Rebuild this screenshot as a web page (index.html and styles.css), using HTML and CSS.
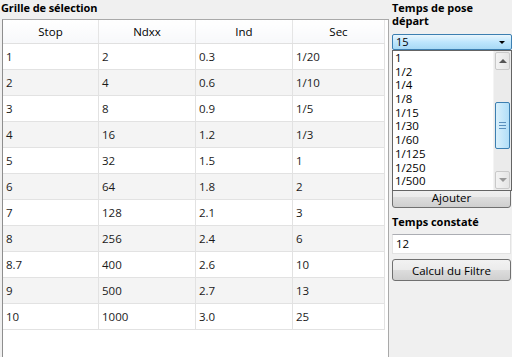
FILE: index.html
```html
<!DOCTYPE html>
<html>
<head>
<meta charset="utf-8">
<link rel="stylesheet" href="styles.css">
</head>
<body>
<div class="app">
  <section class="left">
    <div class="title">Grille de sélection</div>
    <div class="grid">
      <table class="table">
        <thead>
          <tr><th>Stop</th><th>Ndxx</th><th>Ind</th><th>Sec</th></tr>
        </thead>
        <tbody>
          <tr><td>1</td><td>2</td><td>0.3</td><td>1/20</td></tr>
          <tr><td>2</td><td>4</td><td>0.6</td><td>1/10</td></tr>
          <tr><td>3</td><td>8</td><td>0.9</td><td>1/5</td></tr>
          <tr><td>4</td><td>16</td><td>1.2</td><td>1/3</td></tr>
          <tr><td>5</td><td>32</td><td>1.5</td><td>1</td></tr>
          <tr><td>6</td><td>64</td><td>1.8</td><td>2</td></tr>
          <tr><td>7</td><td>128</td><td>2.1</td><td>3</td></tr>
          <tr><td>8</td><td>256</td><td>2.4</td><td>6</td></tr>
          <tr><td>8.7</td><td>400</td><td>2.6</td><td>10</td></tr>
          <tr><td>9</td><td>500</td><td>2.7</td><td>13</td></tr>
          <tr><td>10</td><td>1000</td><td>3.0</td><td>25</td></tr>
        </tbody>
      </table>
    </div>
  </section>
  <aside class="right">
    <div class="label">Temps de pose départ</div>
    <div class="combo-wrap">
      <div class="combo"><span>15</span><span class="arrow"></span></div>
      <div class="dropdown">
        <ul class="list">
          <li>1</li><li>1/2</li><li>1/4</li><li>1/8</li><li>1/15</li>
          <li>1/30</li><li>1/60</li><li>1/125</li><li>1/250</li><li>1/500</li>
        </ul>
        <div class="scrollbar">
          <div class="sb-btn"><span class="tri up"></span></div>
          <div class="sb-track">
            <div class="sb-thumb"><span class="grip"></span></div>
          </div>
          <div class="sb-btn"><span class="tri down"></span></div>
        </div>
      </div>
    </div>
    <button class="btn btn-add">Ajouter</button>
    <div class="label label2">Temps constaté</div>
    <div class="input">12</div>
    <button class="btn btn-calc">Calcul du Filtre</button>
  </aside>
</div>
</body>
</html>
```

FILE: styles.css
```css
html, body {
  margin: 0;
  padding: 0;
  background: #f0f0f0;
  font-family: "Open Sans", "DejaVu Sans", sans-serif;
  font-size: 11px;
  color: #000;
  overflow: hidden;
  height: 357px;
}
.app {
  display: flex;
  height: 357px;
}
.left {
  width: 389px;
  display: flex;
  flex-direction: column;
}
.title {
  font-weight: bold;
  height: 19px;
  line-height: 15px;
  padding-left: 1px;
  letter-spacing: -0.1px;
}
.grid {
  flex: 1;
  margin-left: 2px;
  background: #fff;
  border-top: 1px solid #a9a9a9;
  border-left: 1px solid #8e8e8e;
  border-right: 1px solid #a9a9a9;
  padding-right: 2px;
}
.table {
  border-collapse: collapse;
  table-layout: fixed;
  width: 382px;
}
.table th {
  height: 23px;
  font-weight: normal;
  text-align: center;
  background: linear-gradient(#ffffff, #f7f8fa);
  border-right: 1px solid #e5e5e5;
  border-bottom: 1px solid #e0e0e0;
  padding: 0;
  font-size: 11.5px;
}
.table th:nth-child(1), .table td:nth-child(1) { width: 95px; }
.table th:nth-child(2), .table td:nth-child(2) { width: 96px; }
.table th:nth-child(3), .table td:nth-child(3) { width: 96px; }
.table td {
  height: 25px;
  padding: 0 0 0 3px;
  border-right: 1px solid #e2e2e2;
  border-bottom: 1px solid #e2e2e2;
  font-size: 11.5px;
  color: #1a1a1a;
}
.table tbody tr:nth-child(even) td {
  background: #f4f4f4;
}
.right {
  width: 120px;
  padding-left: 3px;
  display: flex;
  flex-direction: column;
}
.label {
  font-weight: bold;
  line-height: 13px;
  padding-top: 1px;
  width: 100px;
}
.combo-wrap {
  position: relative;
  margin-top: 7px;
}
.combo {
  height: 14px;
  border: 1px solid #3c7fb1;
  border-radius: 2px;
  background: linear-gradient(#eaf6fd, #bee6fd 50%, #a7d9f5);
  display: flex;
  align-items: center;
  justify-content: space-between;
  padding-left: 3px;
  padding-right: 6px;
  line-height: 14px;
}
.arrow {
  width: 0;
  height: 0;
  border-left: 3px solid transparent;
  border-right: 3px solid transparent;
  border-top: 3px solid #000;
}
.dropdown {
  position: absolute;
  left: 0;
  top: 16px;
  width: 118px;
  height: 139px;
  background: #fff;
  border: 1px solid #646464;
  display: flex;
  z-index: 2;
}
.list {
  list-style: none;
  margin: 0;
  padding: 0 0 0 2px;
  flex: 1;
}
.list li {
  height: 13.7px;
  line-height: 13.7px;
  font-size: 11.5px;
}
.scrollbar {
  width: 17px;
  display: flex;
  flex-direction: column;
  background: #ebebeb;
  border-left: 1px solid #f4f4f4;
}
.sb-btn {
  height: 16px;
  border: 1px solid #c9c9c9;
  border-radius: 2px;
  background: linear-gradient(to right, #f3f3f3, #e5e5e5);
  display: flex;
  align-items: center;
  justify-content: center;
  margin: 1px;
}
.tri {
  width: 0;
  height: 0;
  border-left: 4px solid transparent;
  border-right: 4px solid transparent;
}
.tri.up { border-bottom: 4px solid #555; }
.tri.down { border-top: 4px solid #999; }
.sb-track {
  flex: 1;
  position: relative;
}
.sb-thumb {
  position: absolute;
  left: 1px;
  right: 1px;
  top: 31px;
  height: 45px;
  border: 1px solid #3c7fb1;
  border-radius: 2px;
  background: linear-gradient(to right, #d9f0fc, #b2dff8);
  display: flex;
  align-items: center;
  justify-content: center;
}
.grip {
  width: 7px;
  height: 5px;
  border-top: 1px solid #5a8fbd;
  border-bottom: 1px solid #5a8fbd;
  position: relative;
}
.grip::after {
  content: "";
  position: absolute;
  left: 0;
  right: 0;
  top: 2px;
  border-top: 1px solid #5a8fbd;
}
.btn {
  font-family: inherit;
  font-size: 11.5px;
  border: 1px solid #707070;
  border-radius: 3px;
  background: linear-gradient(#f2f2f2, #ebebeb 50%, #dddddd 51%, #cfcfcf);
  color: #000;
  padding: 0;
  width: 119px;
}
.btn-add {
  margin-top: 136px;
  height: 22px;
  line-height: 18px;
  padding-top: 2px;
}
.label2 {
  margin-top: 6px;
}
.input {
  margin-top: 6px;
  height: 18px;
  line-height: 18px;
  background: #fff;
  border: 1px solid #e3e3e3;
  border-top-color: #abadb3;
  padding-left: 3px;
  width: 114px;
  font-size: 11.5px;
}
.btn-calc {
  margin-top: 5px;
  height: 22px;
}
```
